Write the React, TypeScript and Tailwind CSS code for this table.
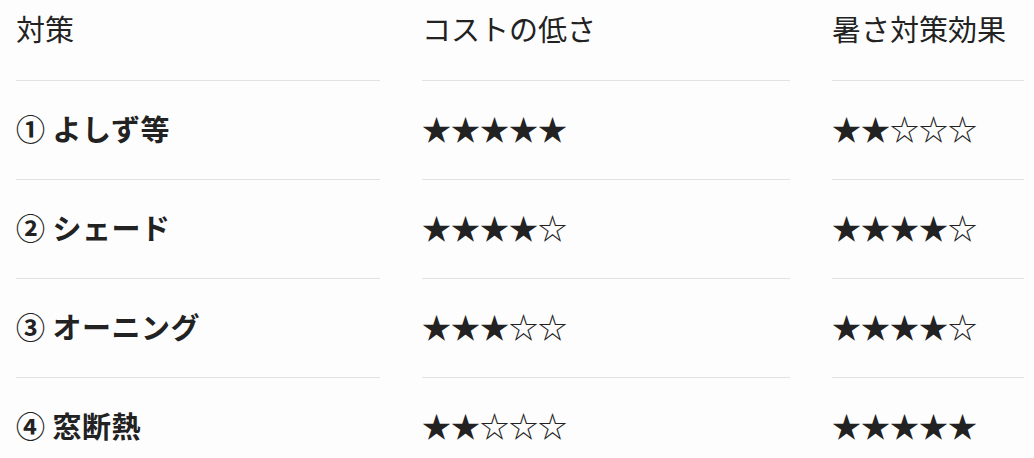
import React from "react";

const rows = [
  { name: "① よしず等", cost: 5, effect: 2 },
  { name: "② シェード", cost: 4, effect: 4 },
  { name: "③ オーニング", cost: 3, effect: 4 },
  { name: "④ 窓断熱", cost: 2, effect: 5 },
];

const stars = (n: number) => "★".repeat(n) + "☆".repeat(5 - n);

export default function App() {
  const font = { fontFamily: '"Noto Sans CJK JP", "Noto Sans", sans-serif' };
  return (
    <div
      className="w-[1034px] h-[458px] overflow-hidden bg-[#fdfdfd] text-[#222222] pl-[16px]"
      style={font}
    >
      <div className="grid grid-cols-[364px_368px_192px] gap-x-[42px]">
        {["対策", "コストの低さ", "暑さ対策効果"].map((h) => (
          <div
            key={h}
            className="h-[81px] border-b border-[#e2e2e2] pt-[8px] text-[29px] leading-[40px] font-normal"
          >
            {h}
          </div>
        ))}
        {rows.map((r) => (
          <React.Fragment key={r.name}>
            <div className="h-[99px] border-b border-[#e2e2e2] flex items-center pb-[2px] text-[29px] font-bold tracking-[0.5px]">
              {r.name}
            </div>
            <div className="h-[99px] border-b border-[#e2e2e2] flex items-center pb-[2px] text-[29px]">
              {stars(r.cost)}
            </div>
            <div className="h-[99px] border-b border-[#e2e2e2] flex items-center pb-[2px] text-[29px]">
              {stars(r.effect)}
            </div>
          </React.Fragment>
        ))}
      </div>
    </div>
  );
}
